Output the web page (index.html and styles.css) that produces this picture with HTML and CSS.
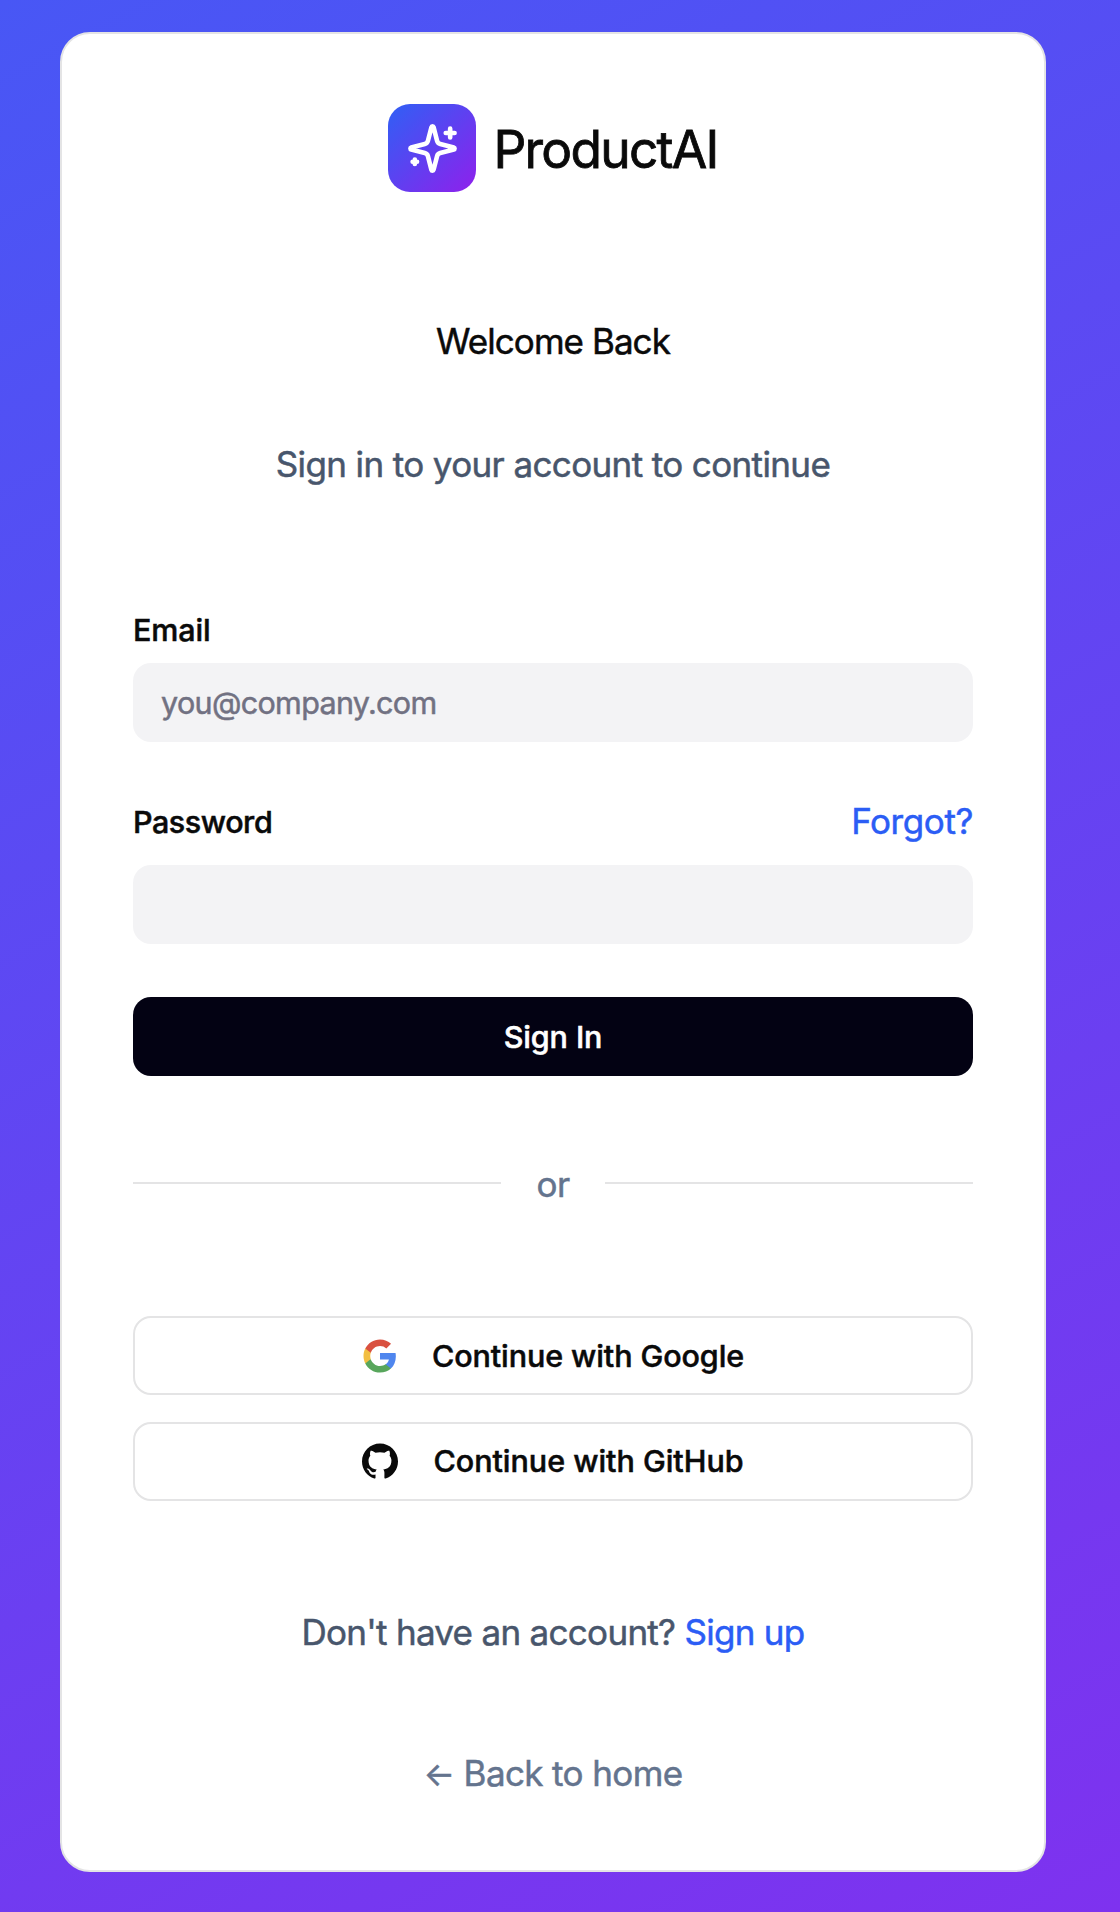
FILE: index.html
```
<!DOCTYPE html>
<html lang="en">

<head>
    <meta charset="UTF-8">
    <meta name="viewport" content="width=device-width, initial-scale=1.0">
    <title>ProductAI - Sign In</title>
    <link rel="stylesheet" href="styles.css">
</head>

<body>
    <main class="card">
        <div class="logo">
            <div class="logo-box">
                <svg width="53" height="53" viewBox="0 0 24 24" fill="none" stroke="#fff" stroke-width="2.1" stroke-linecap="round" stroke-linejoin="round">
                    <path d="M9.937 15.5A2 2 0 0 0 8.5 14.063l-6.135-1.582a.5.5 0 0 1 0-.962L8.5 9.936A2 2 0 0 0 9.937 8.5l1.582-6.135a.5.5 0 0 1 .963 0L14.063 8.5A2 2 0 0 0 15.5 9.937l6.135 1.581a.5.5 0 0 1 0 .964L15.5 14.063a2 2 0 0 0-1.437 1.437l-1.582 6.135a.5.5 0 0 1-.963 0z"/>
                    <path d="M20 3v4M22 5h-4M4 17v2M5 18H3"/>
                </svg>
            </div>
            <span class="logo-name">ProductAI</span>
        </div>

        <h1 class="title">Welcome Back</h1>
        <p class="subtitle">Sign in to your account to continue</p>

        <form class="form">
            <label class="label label-email" for="email">Email</label>
            <input class="input" type="email" id="email" placeholder="you@company.com">

            <div class="password-row">
                <label class="label label-password" for="password">Password</label>
                <a class="forgot" href="#">Forgot?</a>
            </div>
            <input class="input" type="password" id="password">

            <button class="btn btn-primary" type="submit">Sign In</button>
        </form>

        <div class="divider">
            <span class="line"></span>
            <span class="or">or</span>
            <span class="line"></span>
        </div>

        <div class="social">
            <button class="btn btn-outline btn-google" type="button">
                <svg width="36" height="36" viewBox="0 0 24 24">
                    <path fill="#4f86ee" d="M22.56 12.25c0-.78-.07-1.53-.2-2.25H12v4.26h5.92c-.26 1.37-1.04 2.53-2.21 3.31v2.77h3.57c2.08-1.92 3.28-4.74 3.28-8.09z"/>
                    <path fill="#58a65c" d="M12 23c2.97 0 5.46-.98 7.28-2.66l-3.57-2.77c-.98.66-2.23 1.06-3.71 1.06-2.86 0-5.29-1.93-6.16-4.53H2.18v2.84C3.99 20.53 7.7 23 12 23z"/>
                    <path fill="#f2be42" d="M5.84 14.09c-.22-.66-.35-1.36-.35-2.09s.13-1.43.35-2.09V7.07H2.18C1.43 8.55 1 10.22 1 12s.43 3.45 1.18 4.93l2.85-2.22.81-.62z"/>
                    <path fill="#d95140" d="M12 5.38c1.62 0 3.06.56 4.21 1.64l3.15-3.15C17.45 2.09 14.97 1 12 1 7.7 1 3.99 3.47 2.18 7.07l3.66 2.84c.87-2.6 3.3-4.53 6.16-4.53z"/>
                </svg>
                Continue with Google
            </button>
            <button class="btn btn-outline btn-github" type="button">
                <svg width="36" height="36" viewBox="0 0 24 24" fill="#0a0a0a">
                    <path d="M12 .297c-6.63 0-12 5.373-12 12 0 5.303 3.438 9.8 8.205 11.385.6.113.82-.258.82-.577 0-.285-.01-1.04-.015-2.04-3.338.724-4.042-1.61-4.042-1.61C4.422 18.07 3.633 17.7 3.633 17.7c-1.087-.744.084-.729.084-.729 1.205.084 1.838 1.236 1.838 1.236 1.07 1.835 2.809 1.305 3.495.998.108-.776.417-1.305.76-1.605-2.665-.3-5.466-1.332-5.466-5.93 0-1.31.465-2.38 1.235-3.22-.135-.303-.54-1.523.105-3.176 0 0 1.005-.322 3.3 1.23.96-.267 1.98-.399 3-.405 1.02.006 2.04.138 3 .405 2.28-1.552 3.285-1.23 3.285-1.23.645 1.653.24 2.873.12 3.176.765.84 1.23 1.91 1.23 3.22 0 4.61-2.805 5.625-5.475 5.92.42.36.81 1.096.81 2.22 0 1.606-.015 2.896-.015 3.286 0 .315.21.69.825.57C20.565 22.092 24 17.592 24 12.297c0-6.627-5.373-12-12-12"/>
                </svg>
                Continue with GitHub
            </button>
        </div>

        <p class="signup">Don't have an account? <a href="#">Sign up</a></p>
        <a class="back" href="#"><span class="arrow">←</span> Back to home</a>
    </main>
</body>

</html>
```
FILE: styles.css
```
* {
    box-sizing: border-box;
}

body {
    margin: 0;
    min-height: 1912px;
    padding: 32px 74px 40px 60px;
    font-family: Inter, "Liberation Sans", sans-serif;
    font-size: 35px;
    line-height: 54px;
    color: #0a0a0a;
    -webkit-text-stroke: 0.5px;
    background: linear-gradient(152deg, #4857f5, #7e32ef);
}

a {
    color: #2b5df5;
    text-decoration: none;
}

.card {
    display: flex;
    flex-direction: column;
    height: 1840px;
    padding: 70px 71px;
    background-color: #fff;
    border: 2px solid #e4e4e5;
    border-radius: 30px;
}

/* logo */
.logo {
    display: flex;
    align-items: center;
    justify-content: center;
    gap: 17px;
    height: 88px;
}

.logo-box {
    display: flex;
    align-items: center;
    justify-content: center;
    width: 88px;
    height: 88px;
    border-radius: 22px;
    background: linear-gradient(135deg, #2f60f5, #8f20ec);
}

.logo-name {
    padding-top: 1px;
    font-size: 51.5px;
    letter-spacing: -1.75px;
    -webkit-text-stroke: 0.8px;
}

.title {
    margin: 131px 0 0;
    font-size: 35px;
    font-weight: 400;
    line-height: 36px;
    letter-spacing: -0.95px;
    text-align: center;
}

.subtitle {
    margin: 78px 0 0;
    letter-spacing: -0.62px;
    text-align: center;
    color: #48566c;
}

/* form */
.form {
    display: flex;
    flex-direction: column;
    margin-top: 123px;
}

.label {
    font-size: 30.5px;
    font-weight: 500;
}

.label-email {
    line-height: 32px;
    margin-bottom: 17px;
    letter-spacing: -0.1px;
}

.label-password {
    letter-spacing: -0.45px;
}

.input {
    width: 100%;
    height: 79px;
    padding: 0 28px;
    border: none;
    border-radius: 18px;
    outline: none;
    background-color: #f3f3f5;
    font-family: inherit;
    font-size: 30.5px;
    letter-spacing: -0.66px;
}

.input::placeholder {
    color: #717182;
}

.password-row {
    display: flex;
    align-items: center;
    justify-content: space-between;
    margin: 53px 0 16px;
}

.forgot {
    padding-bottom: 2px;
    line-height: 52px;
    letter-spacing: -0.4px;
}

.btn {
    display: flex;
    align-items: center;
    justify-content: center;
    gap: 36px;
    width: 100%;
    height: 79px;
    padding: 0;
    border: none;
    border-radius: 18px;
    font-family: inherit;
    font-size: 30.5px;
    font-weight: 500;
    color: #0a0a0a;
}

.btn-primary {
    margin-top: 53px;
    background-color: #030213;
    color: #fff;
    letter-spacing: -0.1px;
}

.divider {
    display: flex;
    align-items: center;
    gap: 36px;
    margin-top: 81px;
    color: #64748e;
}

.line {
    flex: 1;
    height: 2px;
    margin-bottom: 2px;
    background-color: #e4e4e5;
}

.or {
    width: 32px;
    display: flex;
    justify-content: center;
    letter-spacing: -0.5px;
}

.social {
    display: flex;
    flex-direction: column;
    gap: 27px;
    margin-top: 105px;
}

.btn-outline {
    background-color: #fff;
    border: 2px solid #e4e4e5;
}

.btn-google {
    gap: 34px;
    letter-spacing: -0.09px;
}

.btn-github {
    gap: 35px;
    padding-bottom: 2px;
    letter-spacing: -0.02px;
}

/* footer links */
.signup {
    margin: 104px 0 0;
    letter-spacing: -0.7px;
    text-align: center;
    color: #48566c;
}

.back {
    margin-top: 87px;
    letter-spacing: -0.62px;
    text-align: center;
    color: #64748e;
}

.arrow {
    font-size: 33px;
}
```
